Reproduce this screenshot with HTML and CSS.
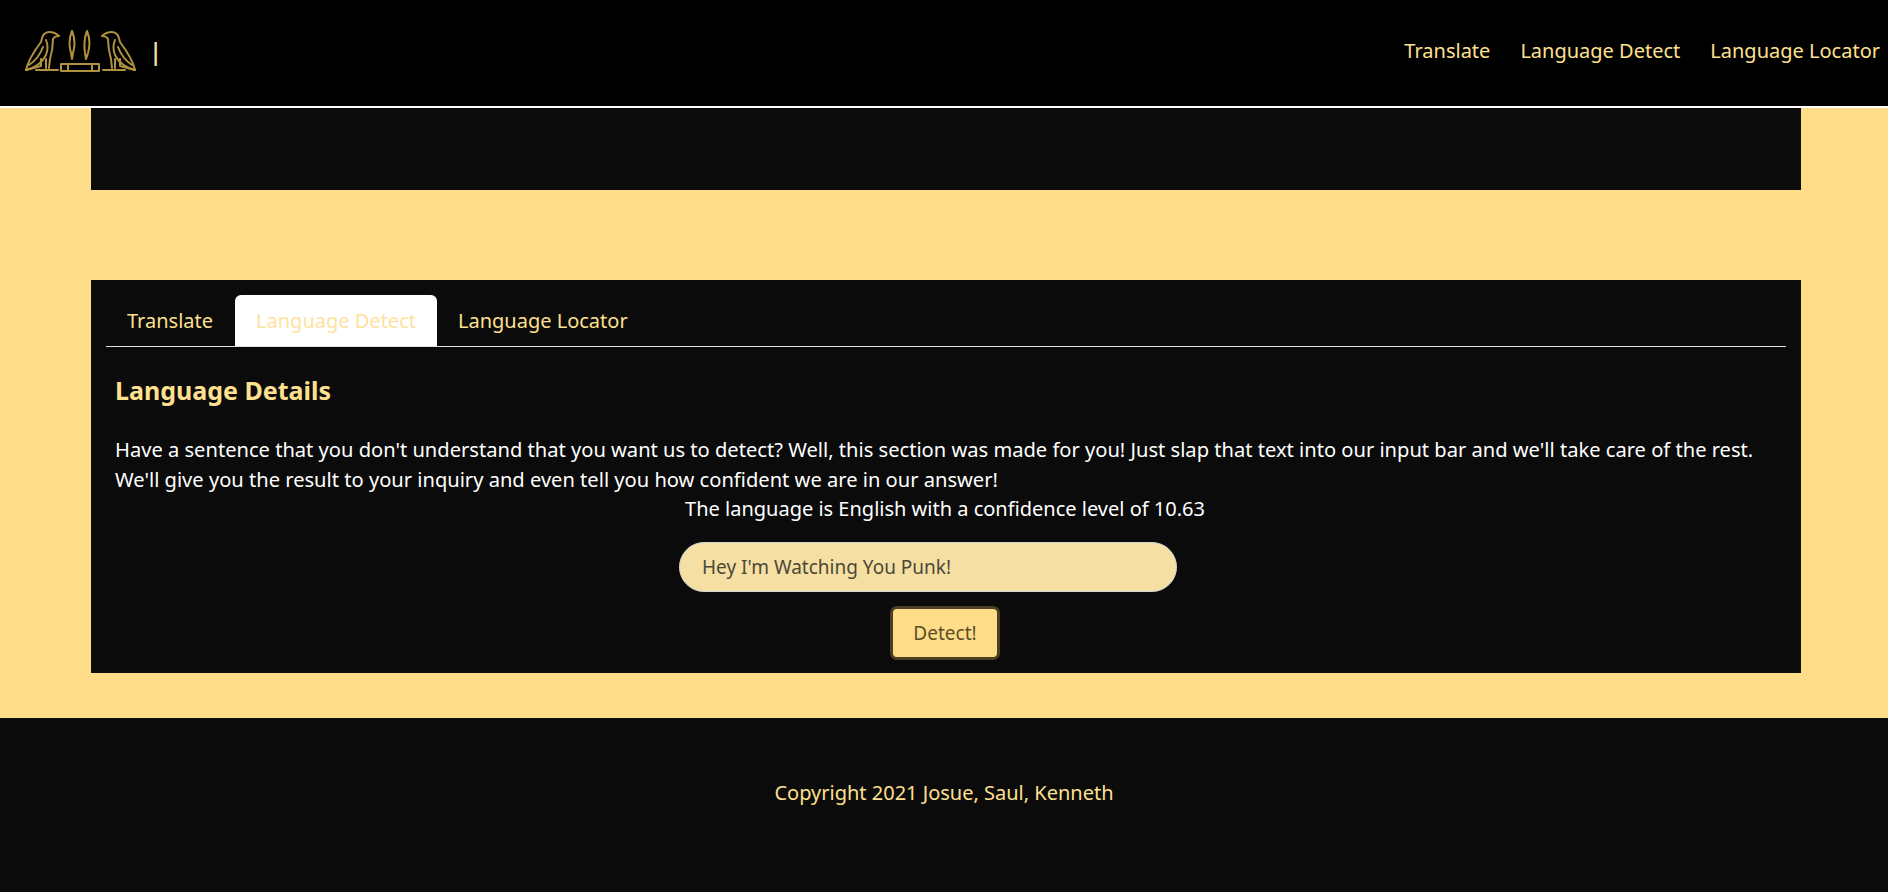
FILE: index.html
```html
<!DOCTYPE html>
<html lang="en">
<head>
  <meta charset="UTF-8" />
  <title>Language Detect</title>
  <link rel="stylesheet" href="styles.css">
</head>
<body>
  <header class="topbar">
    <div class="brand">
      <svg class="logo" width="111" height="42" viewBox="0 0 111 42" fill="none" stroke="#b0913f" stroke-width="2" stroke-linejoin="round" stroke-linecap="round">
        <g id="bird">
          <path d="M1 40 C3 31 10 20 16 12 C17 6 19 2 24 2 C28 2 31 3 34 6 C31 6 29 7 28 9 C28 16 27 22 25 29 L24 38"/>
          <path d="M1 40 C9 38 17 33 21 25 C23 20 23 15 21 10"/>
          <path d="M4 35 C10 31 15 25 18 17"/>
          <path d="M1 40 L16 36 L16 29 M21 29 L21 38 M11 40 L33 40"/>
        </g>
        <use href="#bird" transform="translate(111 0) scale(-1 1)"/>
        <path d="M47 1 C44 8 44 16 46 23 L47 29 L48 23 C50 16 50 8 47 1 Z"/>
        <path d="M62 1 C59 8 59 16 60 23 L61 29 L63 23 C65 16 65 8 62 1 Z"/>
        <rect x="36" y="34" width="38" height="7"/>
        <path d="M43 34 V41 M67 34 V41"/>
      </svg>
      <span class="cursor">|</span>
    </div>
    <nav class="topnav">
      <a href="#">Translate</a>
      <a href="#">Language Detect</a>
      <a href="#">Language Locator</a>
    </nav>
  </header>

  <main class="page">
    <div class="banner"></div>

    <section class="card">
      <ul class="tabs">
        <li class="tab">Translate</li>
        <li class="tab active">Language Detect</li>
        <li class="tab">Language Locator</li>
      </ul>
      <div class="pane">
        <h3>Language Details</h3>
        <p>Have a sentence that you don't understand that you want us to detect? Well, this section was made for you! Just slap that text into our input bar and we'll take care of the rest. We'll give you the result to your inquiry and even tell you how confident we are in our answer!</p>
        <div class="result">The language is English with a confidence level of 10.63</div>
        <input class="detect-input" type="text" value="Hey I'm Watching You Punk!">
        <button class="detect-btn">Detect!</button>
      </div>
    </section>
  </main>

  <footer class="footer">Copyright 2021 Josue, Saul, Kenneth</footer>
</body>
</html>
```

FILE: styles.css
```css
* {
  box-sizing: border-box;
}
body {
  margin: 0;
  background: #ffdd88;
  font-family: "Noto Sans", sans-serif;
  font-size: 20px;
  line-height: 30px;
  color: #fff;
}
.topbar {
  display: flex;
  justify-content: space-between;
  align-items: center;
  height: 108px;
  padding: 0 8px 4px 25px;
  background: #000;
  border-bottom: 2px solid #fff;
}
.brand {
  display: flex;
  align-items: center;
  gap: 13px;
}
.logo {
  display: block;
}
.cursor {
  color: #f0dca0;
  font-size: 24px;
  font-weight: 600;
}
.topnav {
  display: flex;
  gap: 30px;
}
.topnav a {
  color: #ffe08f;
  text-decoration: none;
}
.page {
  padding: 0 87px 45px 91px;
}
.banner {
  height: 82px;
  background: #0b0b0b;
}
.card {
  margin-top: 90px;
  height: 393px;
  padding: 15px 15px 0;
  background: #0b0b0b;
}
.tabs {
  display: flex;
  margin: 0;
  padding: 0;
  list-style: none;
  border-bottom: 1px solid #dee2e6;
}
.tab {
  padding: 11px 21px 10px;
  color: #ffe08f;
  border-radius: 6px 6px 0 0;
}
.tab:first-child {
  padding-right: 22px;
}
.active {
  background: #fff;
  color: #ffe2a0;
}
.pane {
  display: flex;
  flex-direction: column;
  align-items: center;
  padding: 0 11px 0 9px;
}
.pane h3 {
  align-self: flex-start;
  margin: 28px 0 29px;
  font-size: 25px;
  line-height: 30px;
  font-weight: 700;
  color: #ffe08f;
}
.pane p {
  margin: 0;
  align-self: stretch;
  font-size: 20.12px;
}
.detect-input {
  width: 498px;
  height: 50px;
  margin: 18px 34px 0 0;
  padding: 0 22px;
  border: 1px solid #ced4da;
  border-radius: 25px;
  background: #f5dfa3;
  color: #4c4838;
  font: inherit;
  font-size: 19px;
}
.detect-btn {
  width: 110px;
  height: 54px;
  margin-top: 14px;
  border: 3px solid #4b3f24;
  border-radius: 7px;
  background: #ffdd88;
  color: #5c4d28;
  font: inherit;
  font-size: 19px;
}
.footer {
  height: 174px;
  padding-top: 60px;
  background: #0b0b0b;
  color: #ffe08f;
  text-align: center;
}
```
